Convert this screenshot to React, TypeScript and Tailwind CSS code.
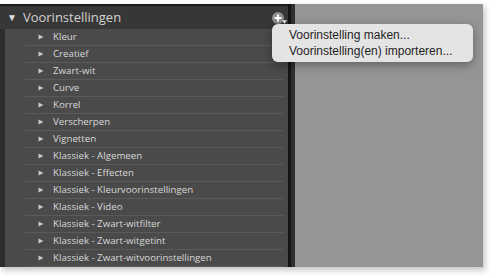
const presets = [
  "Kleur",
  "Creatief",
  "Zwart-wit",
  "Curve",
  "Korrel",
  "Verscherpen",
  "Vignetten",
  "Klassiek - Algemeen",
  "Klassiek - Effecten",
  "Klassiek - Kleurvoorinstellingen",
  "Klassiek - Video",
  "Klassiek - Zwart-witfilter",
  "Klassiek - Zwart-witgetint",
  "Klassiek - Zwart-witvoorinstellingen",
];

function Triangle({ className }: { className?: string }) {
  return (
    <svg viewBox="0 0 6 6" className={className}>
      <path d="M0.5 0.5 L5.5 3 L0.5 5.5 Z" fill="currentColor" />
    </svg>
  );
}

function AddButton() {
  return (
    <span className="relative flex h-[10px] w-[12px] items-center justify-center">
      <span className="absolute left-[0px] top-[-1px] h-[12px] w-[12px] rounded-full bg-[#8c8c8c]" />
      <svg viewBox="0 0 12 12" className="absolute left-0 top-[-1px] h-[12px] w-[12px]">
        <path d="M6 2.5 V9.5 M2.5 6 H9.5" stroke="#fff" strokeWidth="2" />
      </svg>
      <svg viewBox="0 0 6 4" className="absolute left-[10px] top-[7px] h-[4px] w-[5px]">
        <path d="M0 0 H6 L3 4 Z" fill="#e8e8e8" />
      </svg>
    </span>
  );
}

export default function App() {
  return (
    <div className="h-[278px] w-[500px] bg-white pt-[4px]">
      <div className="relative flex h-[263px] w-[483px] shadow-[2px_3px_6px_rgba(0,0,0,0.25)]">
        <div className="flex w-[288px] flex-col bg-[#4a4a4a]">
          <div className="flex h-[25px] items-center border-t-2 border-[#1c1c1c] bg-[#373737] pl-[7px] pr-[3px] font-['Open_Sans',sans-serif] text-[13px] text-[#d2d2d2]">
            <span className="mr-[6px] text-[10px] text-[#dedede]">▼</span>
            <span className="flex-1">Voorinstellingen</span>
            <span className="mr-[1px] mt-[1px]">
              <AddButton />
            </span>
          </div>
          <div className="flex flex-1 border-l-[5px] border-[#2c2c2c]">
            <ul className="flex-1 pl-[20px] pr-[5px]">
              {presets.map((name) => (
                <li
                  key={name}
                  className="flex h-[17px] items-center border-b border-[#5a5a5a] font-['Open_Sans',sans-serif] text-[9.7px] text-[#d8d8d8]"
                >
                  <Triangle className="ml-[13px] mr-[9px] h-[6px] w-[6px] text-[#c9c9c9]" />
                  <span>{name}</span>
                </li>
              ))}
            </ul>
          </div>
        </div>
        <div className="w-[3px] bg-[#141414]" />
        <div className="w-[4px] bg-[#303030]" />
        <div className="flex-1 bg-[#959595]" />

        <div className="absolute left-[272px] top-[20px] w-[201px] rounded-[6px] bg-[#e4e4e4] py-[3px] font-['Liberation_Sans',sans-serif] text-[12px] text-[#1e1e1e] shadow-[0_3px_10px_rgba(0,0,0,0.35)]">
          <div className="flex h-[16px] items-center pl-[17px]">Voorinstelling maken...</div>
          <div className="flex h-[16px] items-center pl-[17px]">Voorinstelling(en) importeren...</div>
        </div>
      </div>
    </div>
  );
}
